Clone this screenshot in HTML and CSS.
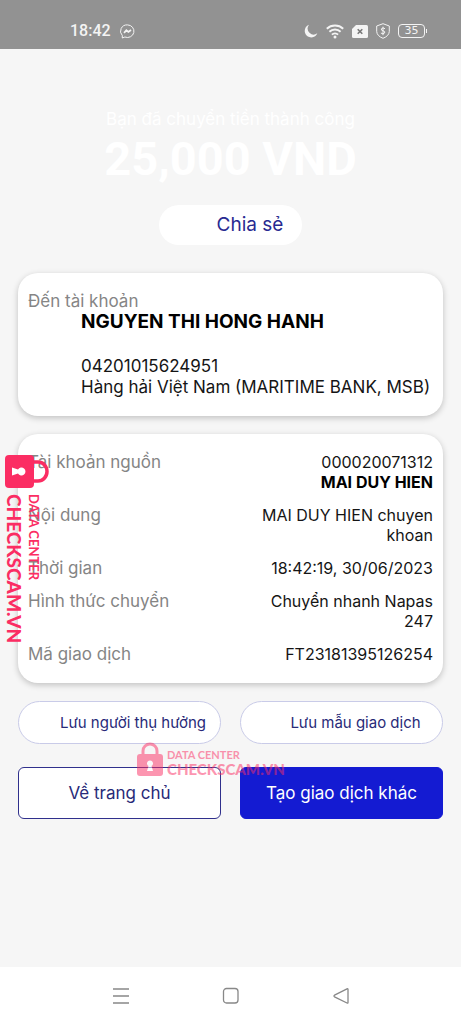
FILE: index.html
```html
<!DOCTYPE html>
<html lang="vi">
<head>
<meta charset="utf-8">
<meta name="viewport" content="width=device-width, initial-scale=1">
<title>Chuyển tiền thành công</title>
<link rel="stylesheet" href="styles.css">
</head>
<body>
<header class="status">
  <span class="clock">18:42</span>
  <svg class="messenger" width="15" height="15" viewBox="0 0 15 15" fill="none" stroke="#f4f4f4"><path d="M7.500.9a6.500 6.300 0 1 1-2.600 12.100L2.300 14V11.500A6.500 6.300 0 0 1 7.500.9Z"/><path d="M4 8.900 6.400 6.300 8.400 8 11 6" stroke-width="1.700"/></svg>
  <div class="tray">
    <svg width="14" height="14" viewBox="0 0 14 14" fill="#f4f4f4"><path d="M5 .8A6.500 6.500 0 1 0 13.300 9.300 6 6 0 0 1 5 .8Z"/></svg>
    <svg width="18" height="15" viewBox="0 0 18 15" fill="none" stroke="#f4f4f4" stroke-width="1.900"><path d="M.8 4.800a12 12 0 0 1 16.400 0M3.400 7.800a8 8 0 0 1 11.200 0M5.900 10.600a4.500 4.500 0 0 1 6.200 0"/><circle cx="9" cy="13" r="1.500" fill="#f4f4f4" stroke="none"/></svg>
    <svg width="16" height="13" viewBox="0 0 16 13"><path d="M4 0H14.500Q16 0 16 1.500V11.500Q16 13 14.500 13H1.500Q0 13 0 11.500V4Z" fill="#f4f4f4"/><path d="M5.700 4.200 10.300 8.800M10.300 4.200 5.700 8.800" stroke="#777" stroke-width="1.600"/></svg>
    <svg width="14" height="16" viewBox="0 0 14 16" fill="none" stroke="#f4f4f4"><path d="M7 .7 13.300 3V8.500Q13 13 7 15.300 1 13 .7 8.500V3Z"/><path d="M9 5.700Q7 4.200 5.500 5.700 4.600 7.300 7 7.800 9.500 8.300 8.600 10 7 11.500 4.900 10.100M7 3.700V12.200"/></svg>
    <span class="battery">35</span>
  </div>
</header>

<main class="screen">
  <section class="hero">
    <p class="hero-note">Bạn đã chuyển tiền thành công</p>
    <h1 class="hero-amount">25,000 VND</h1>
    <button class="share" type="button">Chia sẻ</button>
  </section>

  <section class="card recipient">
    <h2 class="label">Đến tài khoản</h2>
    <div class="recipient-body">
      <p class="recipient-name">NGUYEN THI HONG HANH</p>
      <p>04201015624951</p>
      <p>Hàng hải Việt Nam (MARITIME BANK, MSB)</p>
    </div>
  </section>

  <dl class="card details">
    <div class="row"><dt class="label">Tài khoản nguồn</dt><dd>000020071312<br><strong>MAI DUY HIEN</strong></dd></div>
    <div class="row"><dt class="label">Nội dung</dt><dd>MAI DUY HIEN chuyen khoan</dd></div>
    <div class="row"><dt class="label">Thời gian</dt><dd>18:42:19, 30/06/2023</dd></div>
    <div class="row"><dt class="label">Hình thức chuyển</dt><dd>Chuyển nhanh Napas 247</dd></div>
    <div class="row"><dt class="label">Mã giao dịch</dt><dd>FT23181395126254</dd></div>
  </dl>

  <div class="pair saves">
    <button class="pill" type="button">Lưu người thụ hưởng</button>
    <button class="pill pill-wide" type="button">Lưu mẫu giao dịch</button>
  </div>
  <div class="pair">
    <button class="action" type="button">Về trang chủ</button>
    <button class="action action-main" type="button">Tạo giao dịch khác</button>
  </div>
</main>

<nav class="navbar">
  <button class="nav-btn" type="button" aria-label="Menu"><svg width="18" height="18" viewBox="0 0 18 18" fill="none" stroke="#888" stroke-width="1.300"><path d="M1 2H17M1 9H17M1 16H17"/></svg></button>
  <button class="nav-btn" type="button" aria-label="Home"><svg width="18" height="18" viewBox="0 0 18 18" fill="none" stroke="#888" stroke-width="1.300"><rect x="1.500" y="1.500" width="14.500" height="14.500" rx="3"/></svg></button>
  <button class="nav-btn" type="button" aria-label="Back"><svg width="18" height="18" viewBox="0 0 18 18" fill="none" stroke="#888" stroke-width="1.300" stroke-linejoin="round"><path d="M15 1.800Q16 1.500 16 2.500V15.500Q16 16.500 15 16L2.500 9.800Q1.500 9 2.500 8.200Z"/></svg></button>
</nav>

<div class="mark mark-side">
  <svg width="44" height="34" viewBox="0 0 44 34"><path d="M28 7H33A9 9.500 0 0 1 33 26H28" fill="none" stroke="#fb2d63" stroke-width="3.500"/><rect width="29" height="33" rx="4" fill="#fb2d63"/><path d="M7 12.500 13 14.500A4 4 0 1 1 13 18.500L7 20.500Z" fill="#fff"/></svg>
  <div class="mark-text"><span class="mark-sub">DATA CENTER</span><span class="mark-name">CHECKSCAM.VN</span></div>
</div>
<div class="mark mark-flat">
  <svg width="26" height="34" viewBox="0 0 26 34"><path d="M6 14V9A7 7 0 0 1 20 9V14" fill="none" stroke="#fb2d63" stroke-width="3"/><rect y="12" width="26" height="22" rx="3" fill="#fb2d63"/><path d="M10 29 11.500 24A3 3 0 1 1 14.500 24L16 29Z" fill="#fff"/></svg>
  <div class="mark-text"><span class="mark-sub">DATA CENTER</span><span class="mark-name">CHECKSCAM.VN</span></div>
</div>
</body>
</html>
```
FILE: styles.css
```css
* { box-sizing: border-box; margin: 0; }
body {
  position: relative;
  display: flex;
  flex-direction: column;
  min-height: 100vh;
  background: #f6f6f6;
  color: #151515;
  font: 17px/20px Inter, "Noto Sans", sans-serif;
}
button { font: inherit; cursor: pointer; }

.status {
  display: flex;
  align-items: center;
  height: 49px;
  padding: 13px 36px 0 70px;
  background: #929292;
  color: #f4f4f4;
}
.clock { font: 500 16px/20px Roboto, sans-serif; }
.messenger { margin-left: 9px; }
.tray { display: flex; align-items: center; gap: 8px; margin-left: auto; }
.battery {
  position: relative;
  width: 27px;
  border: 1px solid #f4f4f4;
  border-radius: 4px;
  font: 11px/12px "DejaVu Sans", sans-serif;
  text-align: center;
}
.battery::after {
  content: "";
  position: absolute;
  top: 4px;
  right: -3px;
  width: 1px;
  height: 4px;
  background: #f4f4f4;
}

.screen { flex: 1; padding: 60px 18px 0; }
.hero { display: flex; flex-direction: column; align-items: center; color: #fff; }
.hero-amount { margin-top: 6px; font: 700 47px/48px Roboto, sans-serif; }
.share {
  margin-top: 22px;
  height: 40px;
  padding: 0 19px 0 58px;
  border: 0;
  border-radius: 20px;
  background: #fff;
  color: #282a91;
  font-size: 19px;
}

.card {
  border-radius: 20px;
  background: #fff;
  box-shadow: 0 2px 6px rgba(0, 0, 0, 0.22);
}
.label { color: #858585; font-size: 17px; font-weight: 400; }
.recipient { margin-top: 28px; padding: 18px 10px; }
.recipient-body { padding-left: 53px; line-height: 21px; white-space: nowrap; }
.recipient-name { margin-bottom: 24px; color: #000; font-size: 19px; font-weight: 700; }

.details {
  display: flex;
  flex-direction: column;
  gap: 13px;
  margin-top: 18px;
  padding: 18px 10px 19px;
}
.row { display: flex; justify-content: space-between; gap: 10px; }
.row dd { max-width: 192px; font-size: 16px; text-align: right; }
.row strong { color: #000; }

.pair { display: grid; grid-template-columns: 1fr 1fr; gap: 19px; }
.saves { margin: 18px 0 23px; }
.pill {
  height: 43px;
  padding: 0 11px 0 38px;
  border: 1px solid #c9cbe8;
  border-radius: 22px;
  background: #fff;
  color: #282a78;
  font-size: 15px;
  white-space: nowrap;
}
.pill-wide { padding: 0 20px 0 48px; }
.action {
  height: 52px;
  border: 1px solid #30308c;
  border-radius: 6px;
  background: #fff;
  color: #282a78;
}
.action-main { border-color: #141bd2; background: #141bd2; color: #fff; }

.navbar {
  display: flex;
  justify-content: center;
  gap: 92px;
  height: 57px;
  background: #fff;
}
.nav-btn { padding: 0; border: 0; background: none; line-height: 0; }

.mark {
  position: absolute;
  display: flex;
  color: #fb2d63;
  font-family: Lato, sans-serif;
  pointer-events: none;
}
.mark-text { display: flex; flex-direction: column; white-space: nowrap; }
.mark-name { font-weight: 900; }
.mark-sub { font-weight: 700; }
.mark-side { top: 455px; left: 5px; flex-direction: column; align-items: flex-start; gap: 5px; }
.mark-side .mark-text { writing-mode: vertical-rl; gap: 4px; }
.mark-side .mark-name { font-size: 19px; line-height: 18px; }
.mark-side .mark-sub { font-size: 13px; line-height: 14px; }
.mark-flat { top: 742px; left: 137px; gap: 4px; opacity: 0.5; }
.mark-flat .mark-text { padding-top: 6px; }
.mark-flat .mark-name { font-size: 15px; line-height: 16px; }
.mark-flat .mark-sub { font-size: 11px; line-height: 13px; }
```
